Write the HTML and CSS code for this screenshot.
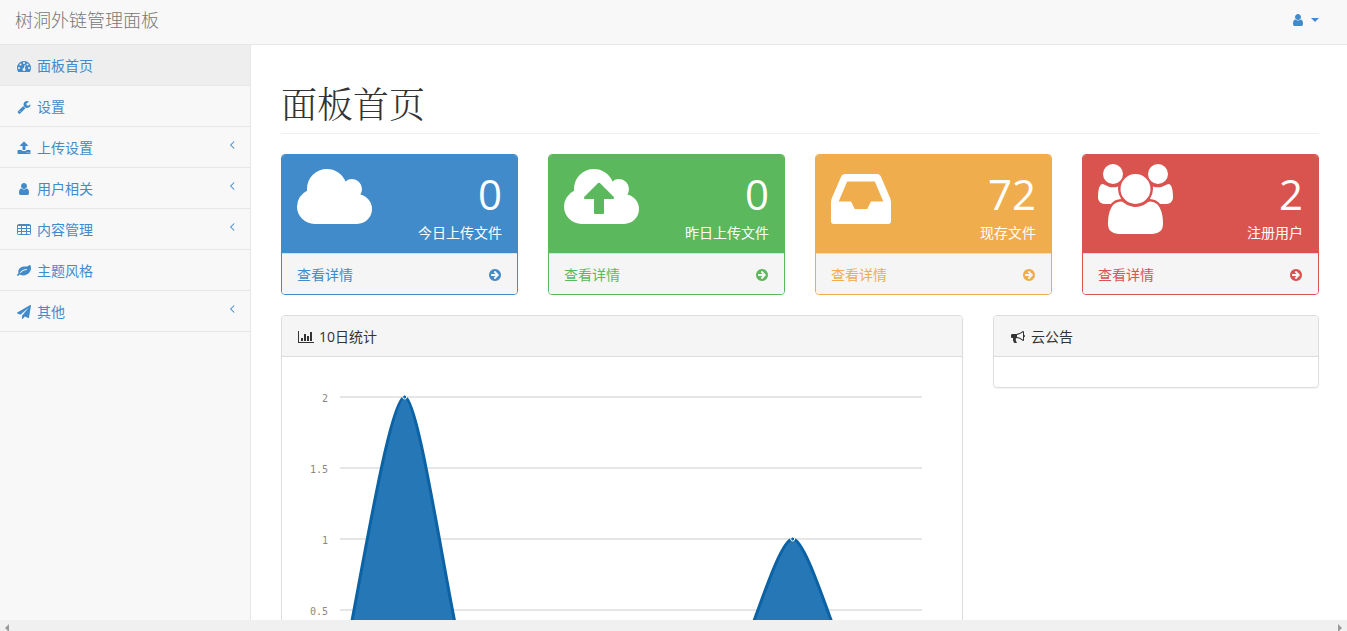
FILE: index.html
```html
<!DOCTYPE html>
<html lang="zh-CN">
<head>
<meta charset="utf-8">
<title>树洞外链管理面板</title>
<link rel="stylesheet" href="styles.css">
</head>
<body>
<svg class="sprite" aria-hidden="true">
  <symbol id="user" viewBox="0 0 1792 1792"><path d="M1536 1399q0 109-62.5 187t-150.5 78h-854q-88 0-150.5-78t-62.5-187q0-85 8.5-160.5t31.5-152 58.5-131 94-89 134.5-34.5q131 128 313 128t313-128q76 0 134.5 34.5t94 89 58.5 131 31.5 152 8.5 160.5zm-256-887q0 159-112.5 271.5t-271.5 112.5-271.5-112.5-112.5-271.5 112.5-271.5 271.5-112.5 271.5 112.5 112.5 271.5z"/></symbol>
  <symbol id="angle" viewBox="0 0 16 16"><path d="M10.5 4 6.500 8l4 4" fill="none" stroke="currentColor" stroke-width="1.2"/></symbol>
  <symbol id="go" viewBox="0 0 1792 1792"><path d="M1413 896q0-27-18-45l-91-91-362-362q-18-18-45-18t-45 18l-91 91q-18 18-18 45t18 45l189 189h-502q-26 0-45 19t-19 45v128q0 26 19 45t45 19h502l-189 189q-18 18-18 45t18 45l91 91q18 18 45 18t45-18l362-362 91-91q18-18 18-45zm251 0q0 209-103 385.5t-279.5 279.5-385.5 103-385.5-103-279.5-279.5-103-385.5 103-385.5 279.5-279.500 385.5-103 385.5 103 279.500 279.500 103 385.500z"/></symbol>
</svg>

<div class="viewport">
  <header class="navbar">
    <a class="brand" href="#">树洞外链管理面板</a>
    <button class="account" type="button" aria-label="用户菜单">
      <svg class="icon"><use href="#user"/></svg><span class="caret"></span>
    </button>
  </header>

  <div class="wrapper">
    <nav class="sidebar">
      <a class="nav-item active" href="#"><svg class="icon" viewBox="0 0 1792 1792"><path d="M384 1152q0-53-37.5-90.5t-90.5-37.5-90.5 37.5-37.5 90.5 37.5 90.5 90.5 37.5 90.5-37.5 37.5-90.5zm192-448q0-53-37.5-90.5t-90.5-37.5-90.5 37.5-37.5 90.5 37.5 90.5 90.5 37.5 90.5-37.5 37.5-90.5zm428 481l101-382q6-26-7.5-48.5t-38.5-29.5-48 6.5-30 39.5l-101 382q-60 5-107 43.5t-63 98.5q-20 77 20 146t117 89 146-20 89-117q16-60-6-117t-72-91zm660-33q0-53-37.5-90.5t-90.5-37.5-90.5 37.5-37.5 90.5 37.5 90.5 90.5 37.5 90.5-37.5 37.5-90.5zm-640-640q0-53-37.5-90.5t-90.5-37.5-90.5 37.5-37.5 90.5 37.5 90.5 90.5 37.5 90.5-37.5 37.5-90.5zm448 192q0-53-37.5-90.5t-90.5-37.5-90.5 37.5-37.5 90.5 37.5 90.5 90.5 37.5 90.5-37.5 37.5-90.5zm320 448q0 261-141 483-19 29-54 29h-1402q-35 0-54-29-141-221-141-483 0-182 71-348t191-286 286-191 348-71 348 71 286 191 191 286 71 348z"/></svg><span>面板首页</span></a>
      <a class="nav-item" href="#"><svg class="icon" viewBox="0 0 1792 1792"><path d="M448 1472q0-26-19-45t-45-19-45 19-19 45 19 45 45 19 45-19 19-45zm644-420l-682 682q-37 37-90 37-52 0-91-37l-106-108q-38-36-38-90 0-53 38-91l681-681q39 98 114.500 173.500t173.500 114.500zm634-435q0 39-23 106-47 134-164.500 217.500t-258.500 83.500q-185 0-316.500-131.500t-131.500-316.500 131.500-316.500 316.500-131.500q58 0 121.500 16.500t107.500 46.500q16 11 16 28t-16 28l-293 169v224l193 107q5-3 79-48.500t135.500-81 70.500-35.500q15 0 23.500 10t8.500 25z"/></svg><span>设置</span></a>
      <a class="nav-item" href="#"><svg class="icon" viewBox="0 0 1792 1792"><path d="M1344 1472q0-26-19-45t-45-19-45 19-19 45 19 45 45 19 45-19 19-45zm256 0q0-26-19-45t-45-19-45 19-19 45 19 45 45 19 45-19 19-45zm128-224v320q0 40-28 68t-68 28h-1472q-40 0-68-28t-28-68v-320q0-40 28-68t68-28h427q21 56 70.500 92t110.500 36h256q61 0 110.500-36t70.500-92h427q40 0 68 28t28 68zm-325-648q-17 40-59 40h-256v448q0 26-19 45t-45 19h-256q-26 0-45-19t-19-45v-448h-256q-42 0-59-40-17-39 14-69l448-448q18-19 45-19t45 19l448 448q31 30 14 69z"/></svg><span>上传设置</span><svg class="angle"><use href="#angle"/></svg></a>
      <a class="nav-item" href="#"><svg class="icon"><use href="#user"/></svg><span>用户相关</span><svg class="angle"><use href="#angle"/></svg></a>
      <a class="nav-item" href="#"><svg class="icon" viewBox="0 0 14 14"><path fill="none" stroke="currentColor" d="M1.500 1.500h11a1 1 0 0 1 1 1v8a1 1 0 0 1-1 1h-11a1 1 0 0 1-1-1v-8a1 1 0 0 1 1-1zM.500 2.500h13M.500 5.500h13M.500 8.500h13M4.500 2v9.500M9.500 2v9.500"/></svg><span>内容管理</span><svg class="angle"><use href="#angle"/></svg></a>
      <a class="nav-item" href="#"><svg class="icon" viewBox="0 0 1792 1792"><path d="M1280 704q0-26-19-45t-45-19q-172 0-318 49.500t-259.500 134-235.500 219.500q-19 21-19 45 0 26 19 45t45 19q24 0 45-19 27-24 74-71t67-66q137-124 268.500-176t313.500-52q26 0 45-19t19-45zm512-198q0 95-20 193-46 224-184.500 383t-357.500 268q-214 108-438 108-148 0-286-47-15-5-88-42t-96-37q-16 0-39.500 32t-45 70-52.500 70-60 32q-43 0-63.500-17.500t-45.500-59.500q-2-4-6-11t-5.500-10-3-9.500-1.500-13.500q0-35 31-73.500t68-65.500 68-56 31-48q0-4-14-38t-16-44q-9-51-9-104 0-115 43.500-220t119-184.500 170.500-139 204-95.500q55-18 145-25.500t179.500-9 178.500-6 163.500-24 113.500-56.500l29.500-29.500 29.500-28 27-20 36.500-16 43.500-4.500q39 0 70.500 46t47.500 112 24 124 8 96z"/></svg><span>主题风格</span></a>
      <a class="nav-item" href="#"><svg class="icon" viewBox="0 0 1792 1792"><path d="M1764 11q33 24 27 64l-256 1536q-5 29-32 45-14 8-31 8-11 0-24-5l-453-185-242 295q-18 23-49 23-13 0-22-4-19-7-30.500-23.500t-11.500-36.500v-349l864-1059-1069 925-395-162q-37-14-40-55-2-40 32-59l1664-960q15-9 32-9 20 0 36 11z"/></svg><span>其他</span><svg class="angle"><use href="#angle"/></svg></a>
    </nav>

    <main class="content">
      <h1 class="page-header">面板首页</h1>

      <div class="cards">
        <section class="card blue">
          <div class="card-heading">
            <svg class="big-icon" viewBox="64 0 1920 1792"><path d="M1984 1152q0 159-112.500 271.500t-271.500 112.500h-1088q-185 0-316.500-131.500t-131.500-316.500q0-132 71-241.500t187-163.500q-2-28-2-43 0-212 150-362t362-150q158 0 286.500 88t187.500 230q70-62 166-62 106 0 181 75t75 181q0 75-41 138 129 30 213 134.500t84 239.500z"/></svg>
            <div class="stat"><div class="number">0</div><div>今日上传文件</div></div>
          </div>
          <a class="card-footer" href="#"><span>查看详情</span><svg class="go"><use href="#go"/></svg></a>
        </section>
        <section class="card green">
          <div class="card-heading">
            <svg class="big-icon" viewBox="64 0 1920 1792"><path d="M1344 864q0-14-9-23l-352-352q-9-9-23-9t-23 9l-351 351q-10 12-10 24 0 14 9 23t23 9h224v352q0 13 9.500 22.500t22.500 9.500h192q13 0 22.500-9.500t9.500-22.500v-352h224q13 0 22.500-9.500t9.500-22.500zm640 288q0 159-112.500 271.500t-271.500 112.500h-1088q-185 0-316.500-131.500t-131.500-316.500q0-130 70-240t188-165q-2-30-2-43 0-212 150-362t362-150q156 0 285.500 87t188.500 231q71-62 166-62 106 0 181 75t75 181q0 76-41 138 130 31 213.500 135.500t83.500 238.500z"/></svg>
            <div class="stat"><div class="number">0</div><div>昨日上传文件</div></div>
          </div>
          <a class="card-footer" href="#"><span>查看详情</span><svg class="go"><use href="#go"/></svg></a>
        </section>
        <section class="card yellow">
          <div class="card-heading">
            <svg class="big-icon" viewBox="128 0 1536 1792"><path d="M1151 960h316q-1-3-2.500-8t-2.500-8l-212-496h-708l-212 496q-1 2-2.500 8t-2.500 8h316l95 192h320zm513 30v482q0 26-19 45t-45 19h-1408q-26 0-45-19t-19-45v-482q0-62 25-123l238-552q10-25 36.500-42t52.500-17h832q26 0 52.500 17t36.500 42l238 552q25 61 25 123z"/></svg>
            <div class="stat"><div class="number">72</div><div>现存文件</div></div>
          </div>
          <a class="card-footer" href="#"><span>查看详情</span><svg class="go"><use href="#go"/></svg></a>
        </section>
        <section class="card red">
          <div class="card-heading">
            <svg class="big-icon" viewBox="64 0 1920 1792"><path d="M657 896q-162 5-265 128h-134q-82 0-138-40.500t-56-118.500q0-353 124-353 6 0 43.500 21t97.500 42.500 119 21.500q67 0 133-23-5 37-5 66 0 139 81 256zm1071 637q0 120-73 189.500t-194 69.500h-874q-121 0-194-69.500t-73-189.500q0-53 3.500-103.500t14-109 26.500-108.500 43-97.500 62-81 85.500-53.500 111.500-20q10 0 43 21.500t73 48 107 48 135 21.500 135-21.500 107-48 73-48 43-21.500q61 0 111.500 20t85.500 53.500 62 81 43 97.500 26.500 108.500 14 109 3.500 103.500zm-1024-1277q0 106-75 181t-181 75-181-75-75-181 75-181 181-75 181 75 75 181zm704 384q0 159-112.500 271.500t-271.500 112.500-271.500-112.500-112.500-271.500 112.500-271.500 271.500-112.500 271.500 112.500 112.500 271.500zm576 225q0 78-56 118.500t-138 40.500h-134q-103-123-265-128 81-117 81-256 0-29-5-66 66 23 133 23 59 0 119-21.500t97.500-42.500 43.500-21q124 0 124 353zm-128-609q0 106-75 181t-181 75-181-75-75-181 75-181 181-75 181 75 75 181z"/></svg>
            <div class="stat"><div class="number">2</div><div>注册用户</div></div>
          </div>
          <a class="card-footer" href="#"><span>查看详情</span><svg class="go"><use href="#go"/></svg></a>
        </section>
      </div>

      <div class="panels">
        <section class="panel wide">
          <h2 class="panel-heading"><svg class="icon" viewBox="0 0 16 14"><path d="M0 1h1v11h15v1H0zM3 8h2v3H3zM6 4h2v7H6zM9 6h2v5H9zM12 2h2v9h-2z"/></svg><span>10日统计</span></h2>
          <div class="panel-body">
            <svg class="chart" viewBox="0 0 650 347" role="img" aria-label="10日统计">
              <g class="grid"><path d="M43 25h582M43 96h582M43 167h582M43 238h582M43 309h582"/></g>
              <g class="ticks"><text x="31" y="30">2</text><text x="31" y="101">1.5</text><text x="31" y="172">1</text><text x="31" y="243">0.5</text></g>
              <path class="area" d="M43 309C59.170 238 91.500 25 107.670 25S156.170 273.500 172.330 309H431C447.150 291.250 479.500 167 495.670 167S544.170 291.250 560.330 309z"/>
              <path class="line" d="M43 309C59.170 238 91.500 25 107.670 25S156.170 273.500 172.330 309H431C447.150 291.250 479.500 167 495.670 167S544.170 291.250 560.330 309H625"/>
              <circle class="point" cx="107.670" cy="25" r="2"/><circle class="point" cx="495.670" cy="167" r="2"/>
            </svg>
          </div>
        </section>
        <section class="panel narrow">
          <h2 class="panel-heading"><svg class="icon" viewBox="0 0 1792 1792"><path d="M1664 640q53 0 90.500 37.500t37.500 90.500-37.500 90.500-90.500 37.500v384q0 52-38 90t-90 38q-417-347-812-380-58 19-91 66t-31 100.500 40 92.500q-20 33-23 65.500t6 58 33.500 55 48 50 61.500 50.500q-29 58-111.500 83t-168.500 11.500-132-55.500q-7-23-29.500-87.500t-32-94.500-23-89-15-101 3.500-98.500 22-110.500h-122q-66 0-113-47t-47-113v-192q0-66 47-113t113-47h480q435 0 896-384 52 0 90 38t38 90v384zm-128 604v-954q-394 302-768 343v270q377 42 768 341z"/></svg><span>云公告</span></h2>
          <div class="panel-body"></div>
        </section>
      </div>
    </main>
  </div>
</div>
<div class="scrollbar" aria-hidden="true"><span class="arrow left"></span><span class="arrow right"></span></div>
</body>
</html>
```

FILE: styles.css
```css
* { box-sizing: border-box; }

body {
  display: flex;
  flex-direction: column;
  height: 100vh;
  margin: 0;
  overflow: hidden;
  background: #fff;
  color: #333;
  font: 400 14px/20px "Open Sans", "Noto Sans CJK SC", sans-serif;
}

a { color: #428bca; text-decoration: none; }
svg { fill: currentColor; flex: none; }
.sprite { position: absolute; width: 0; height: 0; }

.viewport {
  display: flex;
  flex-direction: column;
  flex: 1;
  min-height: 0;
  overflow: hidden;
}

.navbar {
  display: flex;
  flex: none;
  align-items: center;
  justify-content: space-between;
  padding: 10px 28px 14px 15px;
  background: #f8f8f8;
  border-bottom: 1px solid #e7e7e7;
}
.brand { color: #777; font-size: 18px; font-weight: 300; }
.account {
  display: flex;
  align-items: center;
  gap: 4px;
  padding: 0;
  border: 0;
  background: none;
  color: #428bca;
}
.caret {
  border: 4px solid transparent;
  border-top-color: currentColor;
  border-bottom: 0;
}
.icon { width: 18px; height: 14px; }

.wrapper { display: flex; flex: 1; min-height: 0; }
.sidebar {
  flex: none;
  width: 251px;
  background: #f8f8f8;
  border-right: 1px solid #e7e7e7;
}
.nav-item {
  display: flex;
  align-items: center;
  gap: 4px;
  padding: 11px 10px 9px 15px;
  border-bottom: 1px solid #e7e7e7;
}
.active { background: #eee; }
.angle {
  width: 16px;
  height: 14px;
  margin-left: auto;
  align-self: flex-start;
}

.content { flex: 1; min-width: 0; padding: 0 28px 0 30px; }
.page-header {
  margin: 40px 0 20px;
  padding-bottom: 13px;
  border-bottom: 1px solid #eee;
  font: 300 36px/35px "Noto Serif CJK SC", "Noto Sans CJK SC", serif;
}

.cards {
  display: grid;
  grid-template-columns: repeat(4, 1fr);
  gap: 30px;
  margin-bottom: 20px;
}
.card {
  border: 1px solid var(--tone);
  border-radius: 4px;
  overflow: hidden;
}
.blue { --tone: #428bca; }
.green { --tone: #5cb85c; }
.yellow { --tone: #f0ad4e; }
.red { --tone: #d9534f; }
.card-heading {
  display: flex;
  justify-content: space-between;
  padding: 9px 15px 10px;
  background: var(--tone);
  color: #fff;
}
.big-icon { height: 70px; }
.stat { text-align: right; }
.number { font-size: 42px; line-height: 59px; }
.card-footer {
  display: flex;
  align-items: center;
  justify-content: space-between;
  padding: 11px 15px 9px;
  border-top: 1px solid #ddd;
  background: #f5f5f5;
  color: var(--tone);
}
.go { width: 14px; height: 14px; }

.panels {
  display: grid;
  grid-template-columns: repeat(12, 1fr);
  gap: 30px;
  align-items: start;
}
.wide { grid-column: span 8; }
.narrow { grid-column: span 4; }
.panel {
  border: 1px solid #ddd;
  border-radius: 4px;
  box-shadow: 0 1px 1px rgba(0, 0, 0, .05);
  overflow: hidden;
}
.panel-heading {
  display: flex;
  align-items: center;
  gap: 4px;
  margin: 0;
  padding: 11px 15px 9px;
  border-bottom: 1px solid #ddd;
  background: #f5f5f5;
  font-size: 14px;
  font-weight: 400;
}
.panel-body { padding: 15px; }

.chart { display: block; width: 100%; height: auto; }
.grid { stroke: #e6e6e6; stroke-width: 2; }
.ticks {
  fill: #888;
  font: 10px "DejaVu Sans Mono", monospace;
  text-anchor: end;
}
.area { fill: #2577b5; }
.line { fill: none; stroke: #0b62a4; stroke-width: 3; }
.point { fill: #0b62a4; stroke: #fff; stroke-width: 1; }

.scrollbar {
  display: flex;
  flex: none;
  justify-content: space-between;
  height: 11px;
  padding: 4px 5px 0;
  overflow: hidden;
  background: #f0f0f0;
}
.arrow { border: 4px solid transparent; height: 8px; }
.left { border-left: 0; border-right-color: #999; }
.right { border-right: 0; border-left-color: #999; }
```
